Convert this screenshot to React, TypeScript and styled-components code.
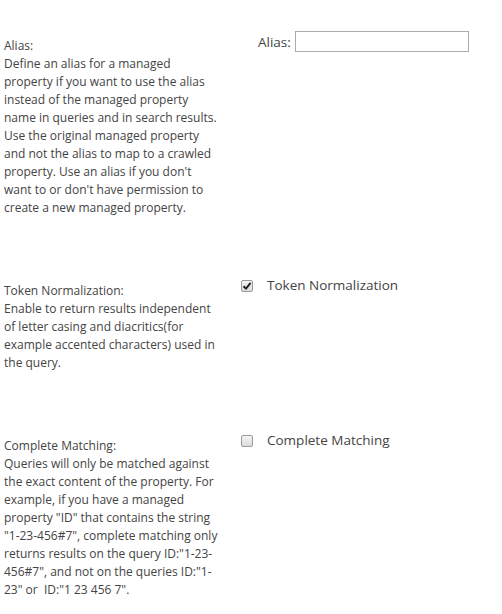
import React from "react";
import styled, { createGlobalStyle } from "styled-components";

const GlobalStyle = createGlobalStyle`
  html, body { margin: 0; padding: 0; background: #fff; }
  body { font-family: "Open Sans", "Noto Sans", sans-serif; color: #444; }
`;

const Page = styled.div`
  padding-top: 31px;
  width: 502px;
  display: flex;
  flex-direction: column;
  gap: 59px;
`;

const Section = styled.div`
  display: grid;
  grid-template-columns: 236px 1fr;
  align-items: start;
`;

const Description = styled.div`
  padding: 6px 0 0 4px;
  font-size: 12px;
  line-height: 18px;
  color: #444;
  white-space: nowrap;
`;

const Line = styled.div``;

const Control = styled.div<{ $indent?: number }>`
  display: flex;
  align-items: center;
  padding-left: ${(p) => p.$indent ?? 0}px;
  min-height: 18px;
`;

const FieldLabel = styled.label`
  font-size: 13.5px;
  color: #444;
  margin-right: 4px;
`;

const TextBox = styled.input`
  box-sizing: border-box;
  width: 174px;
  height: 21px;
  border: 1px solid #ababab;
  padding: 0 4px;
  margin: 0;
  font: inherit;
  outline: none;
`;

const CheckBox = styled.span<{ $checked?: boolean }>`
  box-sizing: border-box;
  width: 12px;
  height: 12px;
  margin-left: 5px;
  margin-top: 1px;
  border: 1px solid #9a9a9a;
  border-radius: 2px;
  background: linear-gradient(#f4f4f4, #dcdcdc);
  display: flex;
  align-items: center;
  justify-content: center;
  flex: none;
`;

const CheckLabel = styled.span`
  margin-left: 14px;
  font-size: 13.5px;
  color: #444;
  line-height: 18px;
`;

const sections: { title: string; lines: string[] }[] = [
  {
    title: "Alias:",
    lines: [
      "Define an alias for a managed",
      "property if you want to use the alias",
      "instead of the managed property",
      "name in queries and in search results.",
      "Use the original managed property",
      "and not the alias to map to a crawled",
      "property. Use an alias if you don't",
      "want to or don't have permission to",
      "create a new managed property.",
    ],
  },
  {
    title: "Token Normalization:",
    lines: [
      "Enable to return results independent",
      "of letter casing and diacritics(for",
      "example accented characters) used in",
      "the query.",
    ],
  },
  {
    title: "Complete Matching:",
    lines: [
      "Queries will only be matched against",
      "the exact content of the property. For",
      "example, if you have a managed",
      'property "ID" that contains the string',
      '"1-23-456#7", complete matching only',
      'returns results on the query ID:"1-23-',
      '456#7", and not on the queries ID:"1-',
      '23" or\u00a0 ID:"1 23 456 7".',
    ],
  },
];

const Desc: React.FC<{ title: string; lines: string[] }> = ({ title, lines }) => (
  <Description>
    <Line>{title}</Line>
    {lines.map((l, i) => (
      <Line key={i}>{l}</Line>
    ))}
  </Description>
);

const Check: React.FC<{ checked?: boolean; label: string }> = ({ checked, label }) => (
  <Control>
    <CheckBox $checked={checked}>
      {checked && (
        <svg width="10" height="10" viewBox="0 0 10 10">
          <path d="M1.5 5.2 L4 7.6 L8.6 1.8" fill="none" stroke="#222" strokeWidth="2" />
        </svg>
      )}
    </CheckBox>
    <CheckLabel>{label}</CheckLabel>
  </Control>
);

export default function App() {
  return (
    <>
      <GlobalStyle />
      <Page>
        <Section>
          <Desc {...sections[0]} />
          <Control $indent={22}>
            <FieldLabel>Alias:</FieldLabel>
            <TextBox type="text" />
          </Control>
        </Section>
        <Section>
          <Desc {...sections[1]} />
          <Check checked label="Token Normalization" />
        </Section>
        <Section>
          <Desc {...sections[2]} />
          <Check label="Complete Matching" />
        </Section>
      </Page>
    </>
  );
}
